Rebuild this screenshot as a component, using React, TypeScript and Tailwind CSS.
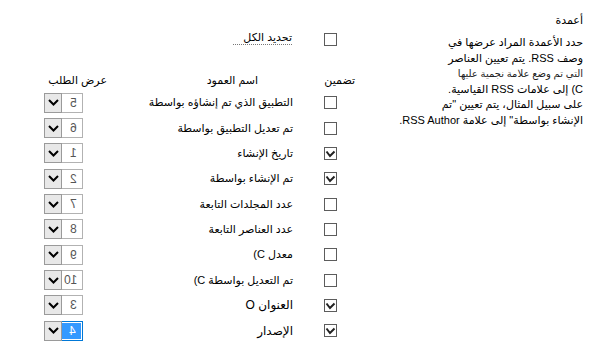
import React from "react";

const rows = [
  { name: "التطبيق الذي تم إنشاؤه بواسطة", checked: false, order: "5" },
  { name: "تم تعديل التطبيق بواسطة", checked: false, order: "6" },
  { name: "تاريخ الإنشاء", checked: true, order: "1" },
  { name: "تم الإنشاء بواسطة", checked: true, order: "2" },
  { name: "عدد المجلدات التابعة", checked: false, order: "7" },
  { name: "عدد العناصر التابعة", checked: false, order: "8" },
  { name: "معدل C)", checked: false, order: "9" },
  { name: "تم التعديل بواسطة C)", checked: false, order: "10" },
  { name: "العنوان O", checked: true, order: "3", big: true },
  { name: "الإصدار", checked: true, order: "4", big: true, selected: true },
];

function Checkbox({ checked }: { checked?: boolean }) {
  return (
    <div className="flex h-[13px] w-[13px] shrink-0 items-center justify-center border border-[#5c5c5c] bg-white">
      {checked && (
        <svg width="11" height="11" viewBox="0 0 11 11" aria-hidden="true">
          <path d="M1.5 3.5 L5 8 L9.5 3.5" fill="none" stroke="#222" strokeWidth="2" />
        </svg>
      )}
    </div>
  );
}

function OrderSelect({ value, selected }: { value: string; selected?: boolean }) {
  return (
    <div
      dir="ltr"
      className={`flex h-[20px] w-[39px] border ${selected ? "border-[#0078d7]" : "border-[#b2b2b2]"} bg-white`}
    >
      <div className="-m-px flex w-[18px] items-center justify-center border border-[#9a9a9a] bg-[#e8e8e8]">
        <svg width="11" height="7" viewBox="0 0 11 7" aria-hidden="true">
          <path d="M1 1 L5.5 5.5 L10 1" fill="none" stroke="#000" strokeWidth="2" />
        </svg>
      </div>
      <div
        className={`flex flex-1 items-center justify-end pr-[5px] text-[12px] ${selected ? "m-px bg-[#3399ff] text-white" : "text-[#555]"}`}
      >
        {/* the order numbers are drawn mirrored in the original dialog */}
        <span className="inline-block [transform:scaleX(-1)]">{value}</span>
      </div>
    </div>
  );
}

export default function App() {
  return (
    <div
      dir="rtl"
      className="flex h-[352px] w-[597px] bg-white pr-[14px] font-['Liberation_Sans','DejaVu_Sans',sans-serif] text-black"
    >
      <div className="w-[170px] shrink-0 pt-[12px] whitespace-nowrap">
        <div className="text-[11px] leading-[16px]">أعمدة</div>
        <div className="mt-[7px] text-[11px] leading-[15.6px]">
          <div>حدد الأعمدة المراد عرضها في</div>
          <div>وصف RSS. يتم تعيين العناصر</div>
          <div className="text-[10px] text-[#222]">التي تم وضع علامة نجمية عليها</div>
          <div>C) إلى علامات RSS القياسية.</div>
          <div>على سبيل المثال، يتم تعيين "تم</div>
          <div>الإنشاء بواسطة" إلى علامة RSS Author.</div>
        </div>
      </div>

      <div className="mr-[58px] w-[311px] shrink-0 pt-[33px]">
        <div className="flex h-[13px] items-center">
          <div className="mr-[18px]">
            <Checkbox />
          </div>
          <span className="mr-[32px] mb-[3px] border-b border-dotted border-[#777] pl-[10px] text-[11px] leading-[13px]">
            تحديد الكل
          </span>
        </div>

        <div className="mt-[26px] grid h-[16px] grid-cols-[55px_190px_66px] items-center text-[11px]">
          <div>تضمين</div>
          <div className="pr-[42px]">اسم العمود</div>
          <div className="pr-[3px]">عرض الطلب</div>
        </div>

        <div className="mt-[2px]">
          {rows.map((r) => (
            <div key={r.name} className="grid h-[25.35px] grid-cols-[55px_190px_66px] items-center">
              <div className="pr-[18px]">
                <Checkbox checked={r.checked} />
              </div>
              <div className={`pr-[7px] ${r.big ? "text-[12px]" : "text-[11px]"}`}>{r.name}</div>
              <div className="flex justify-end">
                <OrderSelect value={r.order} selected={r.selected} />
              </div>
            </div>
          ))}
        </div>
      </div>
    </div>
  );
}
